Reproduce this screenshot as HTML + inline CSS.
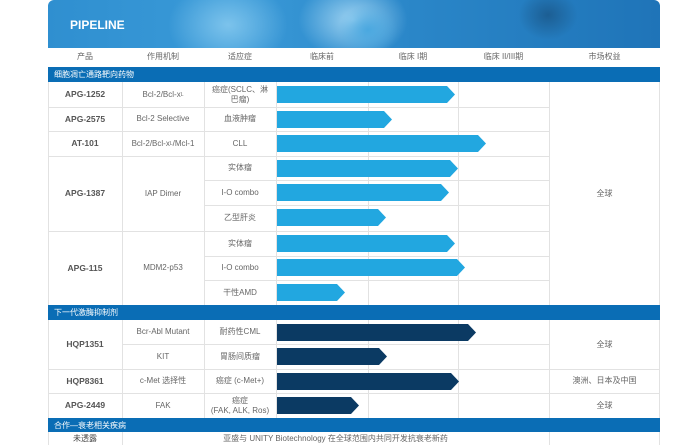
<!DOCTYPE html>
<html><head><meta charset="utf-8"><style>
*{margin:0;padding:0;box-sizing:border-box}
body{width:700px;height:445px;background:#fff;position:relative;overflow:hidden;font-family:"Liberation Sans","Noto Sans CJK SC",sans-serif;color:#666;font-size:8px}
.a{position:absolute}
.hd{left:48px;top:0;width:612px;height:48px;border-radius:6px 6px 0 0;overflow:hidden;background:linear-gradient(90deg,#2f8fd0 0%,#3a9ad8 30%,#2a86c8 60%,#1f74b8 100%)}
.t{position:absolute;display:flex;align-items:center;justify-content:center;text-align:center;line-height:1.2}
.b{font-weight:bold;color:#555;font-size:8.5px}
.hl{position:absolute;height:1px;background:#e2e2e2}
.vl{position:absolute;width:1px;background:#e2e2e2}
.sec{position:absolute;left:48px;width:612px;background:#0a6db5;color:#fff;font-size:8px;padding-left:6px;display:flex;align-items:center}
.bar{position:absolute;left:277px;height:17px;clip-path:polygon(0 0,calc(100% - 8px) 0,100% 50%,calc(100% - 8px) 100%,0 100%)}
.l{background:#22a7e0}.d{background:#0b3a63}
</style></head><body>
<div class="a hd">
<div class="a" style="left:120px;top:-20px;width:120px;height:90px;border-radius:50%;background:radial-gradient(#7cc3ec,transparent 70%)"></div>
<div class="a" style="left:250px;top:-20px;width:110px;height:80px;border-radius:50%;background:radial-gradient(#9ed3f2,transparent 70%)"></div>
<div class="a" style="left:290px;top:5px;width:60px;height:50px;border-radius:50%;background:radial-gradient(#4aa8e0,transparent 70%)"></div>
<div class="a" style="left:470px;top:-10px;width:60px;height:50px;border-radius:50%;background:radial-gradient(#1c5e93,transparent 70%)"></div>
<div class="a" style="left:22px;top:18px;color:#fff;font-weight:bold;font-size:12px">PIPELINE</div>
</div>
<!-- header row -->
<div class="t" style="left:48px;top:48px;width:74px;height:18px">产品</div>
<div class="t" style="left:122px;top:48px;width:82px;height:18px">作用机制</div>
<div class="t" style="left:204px;top:48px;width:72px;height:18px">适应症</div>
<div class="t" style="left:276px;top:48px;width:92px;height:18px">临床前</div>
<div class="t" style="left:368px;top:48px;width:90px;height:18px">临床 I期</div>
<div class="t" style="left:458px;top:48px;width:91px;height:18px">临床 II/III期</div>
<div class="t" style="left:549px;top:48px;width:111px;height:18px">市场权益</div>
<div class="sec" style="top:67px;height:15px">细胞凋亡通路靶向药物</div>
<!-- vertical lines section 1 -->
<div class="vl" style="left:48px;top:82px;height:223px"></div>
<div class="vl" style="left:122px;top:82px;height:223px"></div>
<div class="vl" style="left:204px;top:82px;height:223px"></div>
<div class="vl" style="left:276px;top:82px;height:223px"></div>
<div class="vl" style="left:368px;top:82px;height:223px"></div>
<div class="vl" style="left:458px;top:82px;height:223px"></div>
<div class="vl" style="left:549px;top:82px;height:223px"></div>
<div class="vl" style="left:659px;top:82px;height:223px"></div>
<div class="hl" style="left:48px;top:107px;width:501px"></div>
<div class="hl" style="left:48px;top:131px;width:501px"></div>
<div class="hl" style="left:48px;top:156px;width:501px"></div>
<div class="hl" style="left:204px;top:180px;width:345px"></div>
<div class="hl" style="left:204px;top:205px;width:345px"></div>
<div class="hl" style="left:48px;top:231px;width:501px"></div>
<div class="hl" style="left:204px;top:256px;width:345px"></div>
<div class="hl" style="left:204px;top:280px;width:345px"></div>
<!-- section 1 text -->
<div class="t b" style="left:48px;top:82px;width:74px;height:25px">APG-1252</div>
<div class="t" style="left:122px;top:82px;width:82px;height:25px">Bcl-2/Bcl-x<sub style="font-size:5px">L</sub></div>
<div class="t" style="left:204px;top:82px;width:72px;height:25px">癌症(SCLC、淋<br>巴瘤)</div>
<div class="t b" style="left:48px;top:107px;width:74px;height:24px">APG-2575</div>
<div class="t" style="left:122px;top:107px;width:82px;height:24px">Bcl-2 Selective</div>
<div class="t" style="left:204px;top:107px;width:72px;height:24px">血液肿瘤</div>
<div class="t b" style="left:48px;top:131px;width:74px;height:25px">AT-101</div>
<div class="t" style="left:122px;top:131px;width:82px;height:25px">Bcl-2/Bcl-x<sub style="font-size:5px">L</sub>/Mcl-1</div>
<div class="t" style="left:204px;top:131px;width:72px;height:25px">CLL</div>
<div class="t b" style="left:48px;top:156px;width:74px;height:75px">APG-1387</div>
<div class="t" style="left:122px;top:156px;width:82px;height:75px">IAP Dimer</div>
<div class="t" style="left:204px;top:156px;width:72px;height:24px">实体瘤</div>
<div class="t" style="left:204px;top:180px;width:72px;height:25px">I-O combo</div>
<div class="t" style="left:204px;top:205px;width:72px;height:26px">乙型肝炎</div>
<div class="t b" style="left:48px;top:231px;width:74px;height:74px">APG-115</div>
<div class="t" style="left:122px;top:231px;width:82px;height:74px">MDM2-p53</div>
<div class="t" style="left:204px;top:231px;width:72px;height:25px">实体瘤</div>
<div class="t" style="left:204px;top:256px;width:72px;height:24px">I-O combo</div>
<div class="t" style="left:204px;top:280px;width:72px;height:25px">干性AMD</div>
<div class="t" style="left:549px;top:82px;width:111px;height:223px">全球</div>
<div class="bar l" style="top:86px;width:178px"></div>
<div class="bar l" style="top:111px;width:115px"></div>
<div class="bar l" style="top:135px;width:209px"></div>
<div class="bar l" style="top:160px;width:181px"></div>
<div class="bar l" style="top:184px;width:172px"></div>
<div class="bar l" style="top:209px;width:109px"></div>
<div class="bar l" style="top:235px;width:178px"></div>
<div class="bar l" style="top:259px;width:188px"></div>
<div class="bar l" style="top:284px;width:68px"></div>
<div class="sec" style="top:305px;height:15px">下一代激酶抑制剂</div>
<!-- section 2 -->
<div class="vl" style="left:48px;top:320px;height:98px"></div>
<div class="vl" style="left:122px;top:320px;height:98px"></div>
<div class="vl" style="left:204px;top:320px;height:98px"></div>
<div class="vl" style="left:276px;top:320px;height:98px"></div>
<div class="vl" style="left:368px;top:320px;height:98px"></div>
<div class="vl" style="left:458px;top:320px;height:98px"></div>
<div class="vl" style="left:549px;top:320px;height:98px"></div>
<div class="vl" style="left:659px;top:320px;height:98px"></div>
<div class="hl" style="left:122px;top:344px;width:427px"></div>
<div class="hl" style="left:48px;top:369px;width:612px"></div>
<div class="hl" style="left:48px;top:393px;width:612px"></div>
<div class="t b" style="left:48px;top:320px;width:74px;height:49px">HQP1351</div>
<div class="t" style="left:122px;top:320px;width:82px;height:24px">Bcr-Abl Mutant</div>
<div class="t" style="left:204px;top:320px;width:72px;height:24px">耐药性CML</div>
<div class="t" style="left:122px;top:344px;width:82px;height:25px">KIT</div>
<div class="t" style="left:204px;top:344px;width:72px;height:25px">胃肠间质瘤</div>
<div class="t b" style="left:48px;top:369px;width:74px;height:24px">HQP8361</div>
<div class="t" style="left:122px;top:369px;width:82px;height:24px">c-Met 选择性</div>
<div class="t" style="left:204px;top:369px;width:72px;height:24px">癌症 (c-Met+)</div>
<div class="t b" style="left:48px;top:393px;width:74px;height:25px">APG-2449</div>
<div class="t" style="left:122px;top:393px;width:82px;height:25px">FAK</div>
<div class="t" style="left:204px;top:393px;width:72px;height:25px">癌症<br>(FAK, ALK, Ros)</div>
<div class="t" style="left:549px;top:320px;width:111px;height:49px">全球</div>
<div class="t" style="left:549px;top:369px;width:111px;height:24px">澳洲、日本及中国</div>
<div class="t" style="left:549px;top:393px;width:111px;height:25px">全球</div>
<div class="bar d" style="top:324px;width:199px"></div>
<div class="bar d" style="top:348px;width:110px"></div>
<div class="bar d" style="top:373px;width:182px"></div>
<div class="bar d" style="top:397px;width:82px"></div>
<div class="sec" style="top:418px;height:14px">合作—衰老相关疾病</div>
<div class="vl" style="left:48px;top:432px;height:13px"></div>
<div class="vl" style="left:122px;top:432px;height:13px"></div>
<div class="vl" style="left:549px;top:432px;height:13px"></div>
<div class="vl" style="left:659px;top:432px;height:13px"></div>
<div class="t" style="left:48px;top:432px;width:74px;height:13px;color:#444">未透露</div>
<div class="t" style="left:122px;top:432px;width:427px;height:13px">亚盛与 UNITY Biotechnology 在全球范围内共同开发抗衰老新药</div>
</body></html>
